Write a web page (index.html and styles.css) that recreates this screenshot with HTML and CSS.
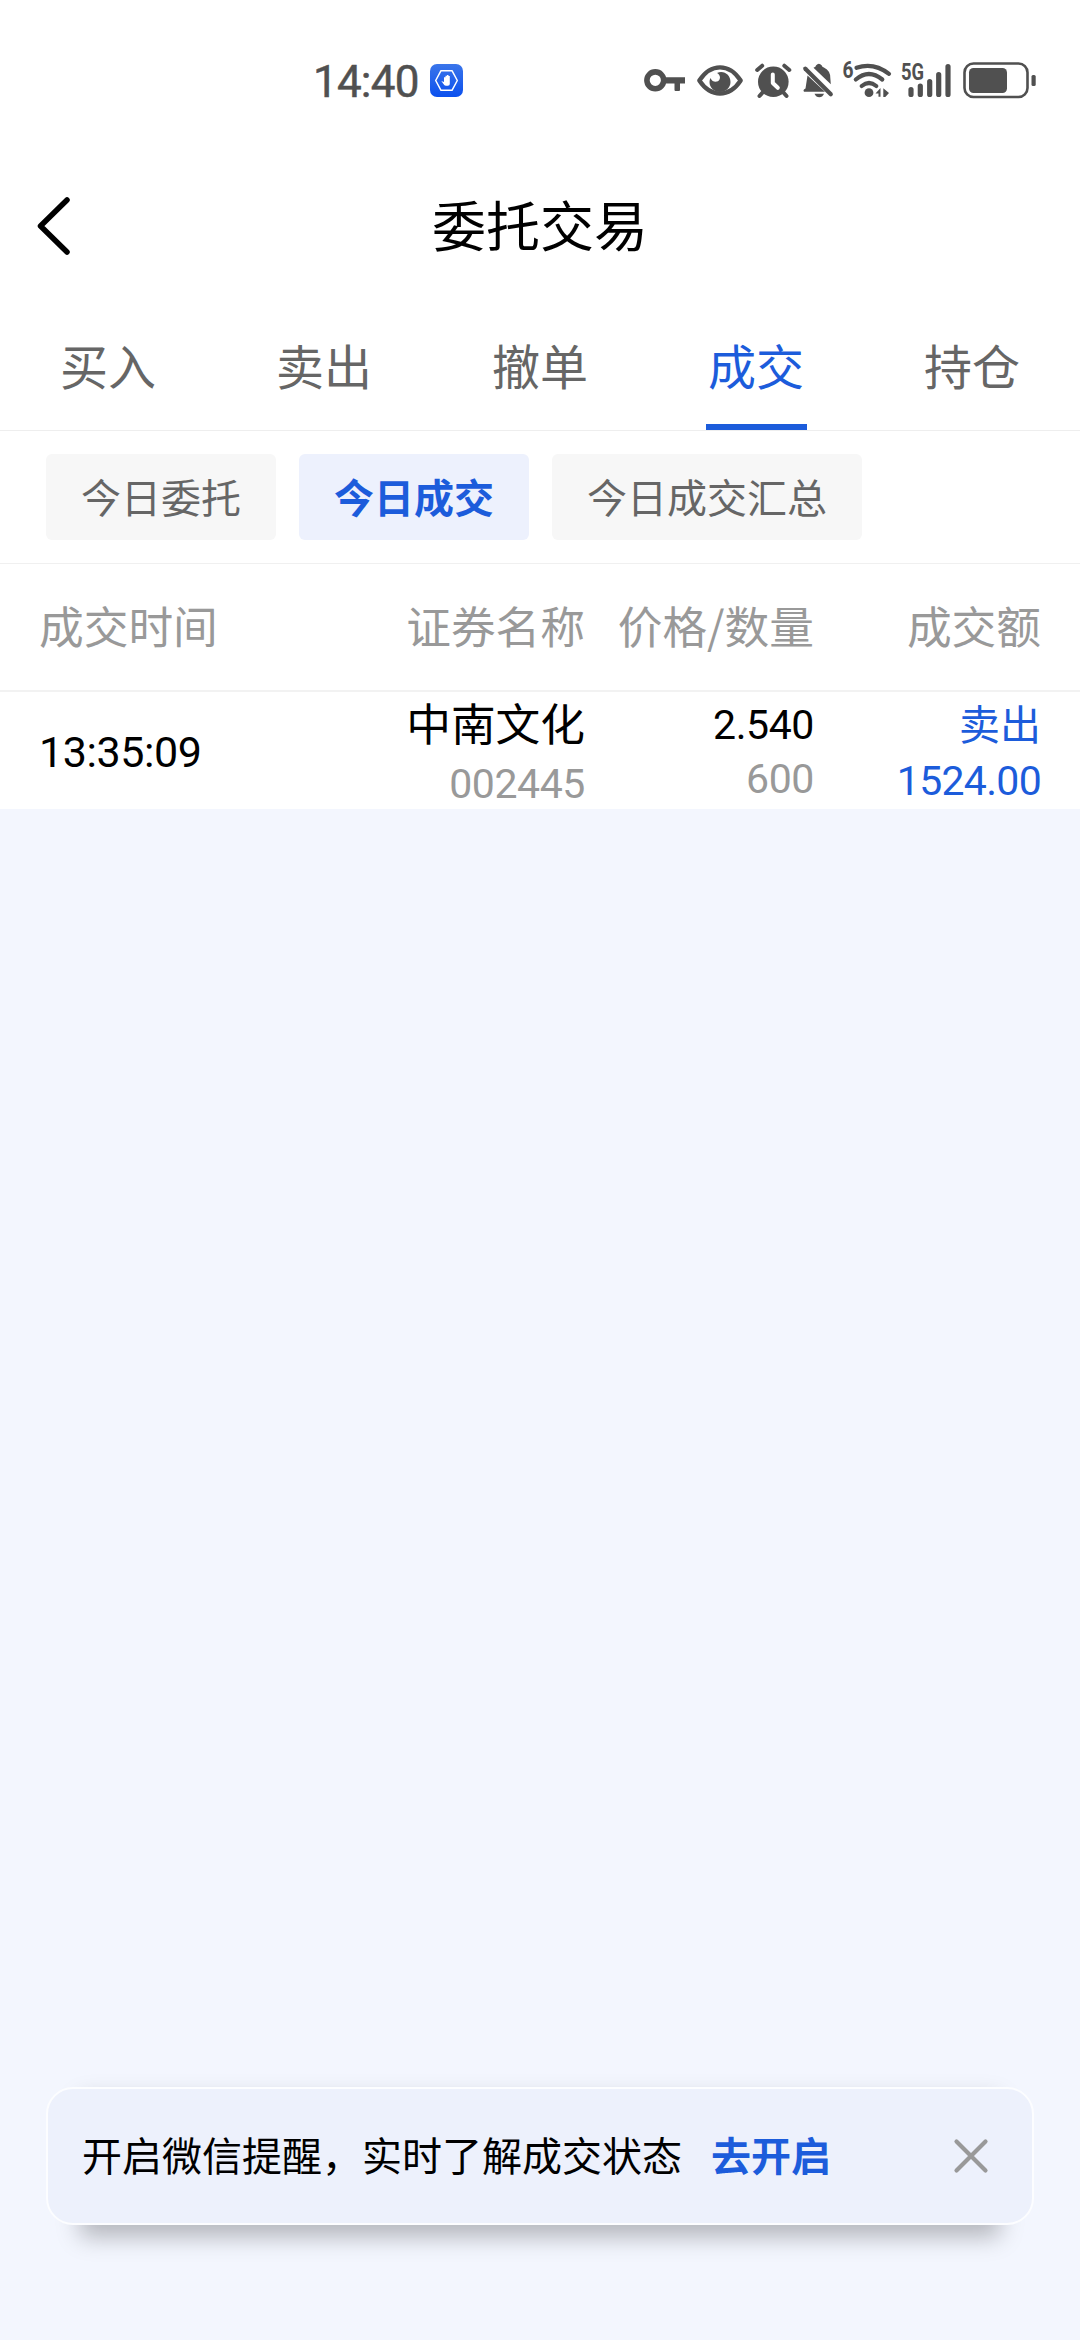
FILE: index.html
```html
<!DOCTYPE html>
<html lang="zh-CN">

<head>
    <meta charset="UTF-8">
    <meta name="viewport" content="width=device-width, initial-scale=1.0">
    <title>委托交易</title>
    <link rel="stylesheet" href="styles.css">
</head>

<body>
    <div class="status">
        <div class="status-left">
            <span class="clock">14:40</span>
            <svg class="app-icon" width="33" height="33" viewBox="0 0 33 33">
                <defs>
                    <linearGradient id="azul" x1="0" y1="0" x2="0" y2="1">
                        <stop offset="0" stop-color="#3a75ea" />
                        <stop offset="1" stop-color="#0b50ee" />
                    </linearGradient>
                </defs>
                <rect width="33" height="33" rx="7" fill="url(#azul)" />
                <path d="M11 6.7h11l5.3 9.8-5.3 9.8H11L5.700 16.500z" fill="none" stroke="#fff" stroke-width="1.500" stroke-linejoin="round" />
                <path d="M11.300 17l2.700 1v-4.800h1.500v-1.500h1.500V11h1.500v1h1.300v8q0 1.800-2 1.800h-2q-1.500 0-2.500-2z" fill="#fff" />
            </svg>
        </div>
        <div class="status-right">
            <!-- vpn key -->
            <svg class="key" width="42" height="40" viewBox="644 60 42 40">
                <circle cx="655.300" cy="80.300" r="8.400" fill="none" stroke="#505050" stroke-width="5.600" />
                <path d="M664 77.300h21v6.200h-5V90q0 1-1 1h-3.500q-1 0-1-1v-6.500H664z" fill="#505050" />
            </svg>
            <!-- eye -->
            <svg class="eye" width="46" height="40" viewBox="697 60 46 40">
                <path d="M699.300 80.500Q708 67.300 720 67.300T740.700 80.500Q732 93.500 720 93.500T699.300 80.500z" fill="none" stroke="#505050" stroke-width="4.300" stroke-linejoin="round" />
                <path d="M717 73c7-3 13.500 2 13.500 9 0 6-5 10-10.500 10s-10.500-4-10.500-10q0-2 1-4c2 5 7.500 4.500 9 1.500 1.300-2.500 0-5-2.500-6.500z" fill="#505050" />
            </svg>
            <!-- alarm -->
            <svg class="alarm" width="37" height="40" viewBox="755 60 37 40">
                <circle cx="773.300" cy="81.700" r="15.300" fill="#505050" />
                <path d="M757.200 70l5-4.300M789.300 70l-5-4.300M763 92l-3.500 4M783 92l3.500 4" fill="none" stroke="#505050" stroke-width="4" stroke-linecap="round" />
                <path d="M772.800 74.500v8.500l5 4.800" fill="none" stroke="#fff" stroke-width="4" stroke-linecap="round" stroke-linejoin="round" />
            </svg>
            <!-- muted bell -->
            <svg class="bell" width="31" height="40" viewBox="803 60 31 40">
                <path d="M807.500 75.500L825 91.700h-21q-1.500-1.700 1.500-3.200z" fill="#505050" />
                <path d="M813.500 67.800q2.500-1 2.500-2.300 2.800-3.300 5.800 0 0 1.300 2.500 2.300 6 3 6 10l.5 6.500z" fill="#505050" />
                <path d="M814.500 93.700h9.500q-1.500 3.500-4.700 3.500t-4.800-3.500z" fill="#505050" />
                <path d="M805.300 68.800l25.500 25.500" fill="none" stroke="#505050" stroke-width="4.200" stroke-linecap="round" />
            </svg>
            <!-- wifi 6 -->
            <svg class="wifi" width="51" height="40" viewBox="840 60 51 40">
                <text x="842.500" y="78" class="tiny" textLength="11" lengthAdjust="spacingAndGlyphs">6</text>
                <path d="M856.500 67.800q17-6 32.500 6M855.800 79.500q13-11 26.500 0M861.700 86q7.300-6 14.600 0" fill="none" stroke="#505050" stroke-width="4.200" stroke-linecap="round" />
                <circle cx="869" cy="92.700" r="4.400" fill="#505050" />
                <path d="M875.500 93.500l5-5.500v8.800h-2v-3.300zM883.300 88.300l5.700 4.700-3.700 4h-2z" fill="#505050" />
            </svg>
            <!-- 5G signal -->
            <svg class="signal" width="51" height="40" viewBox="901 60 51 40">
                <text x="901" y="80" class="tiny" textLength="23" lengthAdjust="spacingAndGlyphs">5G</text>
                <path d="M911 89.500v5M920.300 86v8.500M929.700 81.500v13M938.700 74.700v19.800M948 66.500v28" fill="none" stroke="#505050" stroke-width="5.200" stroke-linecap="round" />
            </svg>
            <!-- battery -->
            <svg class="battery" width="73" height="40" viewBox="963 60 73 40">
                <rect x="964.500" y="63.500" width="63" height="33.500" rx="9" fill="none" stroke="#505050" stroke-width="2.600" />
                <rect x="969" y="68" width="38" height="25" rx="4.500" fill="#505050" />
                <rect x="1031.500" y="75" width="4.200" height="11" rx="1.500" fill="#505050" />
            </svg>
        </div>
    </div>

    <div class="header">
        <svg class="back" width="34" height="60" viewBox="0 0 34 60">
            <path d="M31 4L4.500 30L31 56" fill="none" stroke="#000" stroke-width="5.500" stroke-linecap="round" stroke-linejoin="round" />
        </svg>
        <div class="title">委托交易</div>
    </div>

    <div class="tabs">
        <div class="tab"><span>买入</span></div>
        <div class="tab"><span>卖出</span></div>
        <div class="tab"><span>撤单</span></div>
        <div class="tab active"><span>成交</span></div>
        <div class="tab"><span>持仓</span></div>
    </div>

    <div class="chips">
        <div class="chip">今日委托</div>
        <div class="chip selected">今日成交</div>
        <div class="chip">今日成交汇总</div>
    </div>

    <div class="row head">
        <div class="time">成交时间</div>
        <div class="name">证券名称</div>
        <div class="price">价格/数量</div>
        <div class="amount">成交额</div>
    </div>

    <div class="row deal">
        <div class="time">
            <div class="hour">13:35:09</div>
        </div>
        <div class="name">
            <div class="stock">中南文化</div>
            <div class="code">002445</div>
        </div>
        <div class="price">
            <div class="value">2.540</div>
            <div class="count">600</div>
        </div>
        <div class="amount">
            <div class="side">卖出</div>
            <div class="total">1524.00</div>
        </div>
    </div>

    <div class="content"></div>

    <div class="notice">
        <span class="notice-text">开启微信提醒，实时了解成交状态</span>
        <span class="notice-link">去开启</span>
        <svg class="close" width="38" height="38" viewBox="0 0 38 38">
            <path d="M4.500 4.500L33.500 33.500M33.500 4.500L4.500 33.500" fill="none" stroke="#999" stroke-width="4.200" stroke-linecap="round" />
        </svg>
    </div>
</body>

</html>
```
FILE: styles.css
```css
* {
    box-sizing: border-box;
}

body {
    margin: 0;
    width: 1080px;
    height: 2340px;
    display: flex;
    flex-direction: column;
    overflow: hidden;
    background-color: #f3f6fe;
    color: #000;
    font-family: "Noto Sans CJK SC", sans-serif;
}

svg {
    display: block;
    flex: none;
    overflow: visible;
}

/* status bar */
.status {
    height: 160px;
    padding: 60px 44px 0 313px;
    display: flex;
    justify-content: space-between;
    background-color: #fff;
}

.status-left,
.status-right {
    height: 40px;
    display: flex;
    align-items: center;
}

.clock {
    width: 117px;
    padding-top: 3px;
    font-family: Roboto, sans-serif;
    font-size: 44px;
    line-height: 44px;
    letter-spacing: -0.8px;
    color: #505050;
    -webkit-text-stroke: 0.5px #505050;
}

.tiny {
    font-family: Roboto, sans-serif;
    font-size: 23px;
    font-weight: 700;
    fill: #505050;
}

.eye,
.bell,
.battery {
    margin-left: 11px;
}

.alarm {
    margin-left: 12px;
}

.wifi {
    margin-left: 6px;
}

.signal {
    margin-left: 10px;
}

/* title */
.header {
    height: 132px;
    padding-left: 36px;
    display: flex;
    align-items: center;
    background-color: #fff;
}

.title {
    flex: 1;
    padding: 0 70px 4px 0;
    text-align: center;
    font-size: 54px;
    line-height: 80px;
}

/* tabs */
.tabs {
    height: 139px;
    display: flex;
    background-color: #fff;
    border-bottom: 1px solid #eee;
}

.tab {
    flex: 1;
    display: flex;
    justify-content: center;
    font-size: 48px;
    line-height: 144px;
    color: #666;
}

.tab span {
    width: 101px;
    height: 138px;
    text-align: center;
}

.active {
    color: #1c5cdb;
}

.active span {
    border-bottom: 6px solid #1c5cdb;
}

.chips {
    height: 133px;
    padding: 23px 46px;
    display: flex;
    gap: 23px;
    background-color: #fff;
    border-bottom: 1px solid #f0f0f0;
}

.chip {
    height: 86px;
    padding: 0 35px;
    border-radius: 6px;
    font-size: 40px;
    line-height: 84px;
    color: #666;
    background-color: #f7f7f7;
}

.selected {
    color: #1c5cdb;
    background-color: #edf1fd;
    font-weight: 700;
}

/* table */
.row {
    padding: 0 39px;
    display: flex;
    background-color: #fff;
    text-align: right;
}

.head {
    height: 128px;
    font-size: 44.7px;
    line-height: 122px;
    color: #999;
    border-bottom: 2px solid #f2f2f2;
}

.time {
    width: 270px;
    text-align: left;
}

.name {
    width: 276px;
}

.price {
    width: 229px;
}

.amount {
    flex: 1;
}

.deal {
    height: 117px;
}

.hour,
.code,
.value,
.count,
.total {
    font-family: Roboto, sans-serif;
    font-size: 41px;
    letter-spacing: -0.4px;
}

.hour {
    font-size: 43px;
    line-height: 120px;
}

.stock {
    font-size: 44.7px;
    line-height: 60px;
}

.code {
    line-height: 64px;
    color: #999;
}

.value {
    line-height: 66px;
}

.count {
    line-height: 43px;
    color: #999;
}

.side,
.total {
    color: #1c5cdb;
}

.side {
    font-size: 41px;
    line-height: 60px;
}

.total {
    line-height: 58px;
    letter-spacing: -0.7px;
}

.content {
    flex: 1;
}

/* bottom notice */
.notice {
    position: relative;
    height: 138px;
    margin: 0 46px 115px;
    padding: 0 42px 0 34px;
    display: flex;
    align-items: center;
    border: 2px solid #fcfdff;
    border-radius: 27px;
    background-color: #edf1fc;
    font-size: 40px;
    line-height: 60px;
}

/* shadow is narrower than the card */
.notice::before {
    content: "";
    position: absolute;
    z-index: -1;
    top: -2px;
    bottom: -2px;
    left: 32px;
    right: 32px;
    box-shadow: 0 12px 22px rgba(0, 0, 0, 0.26);
}

.notice-text,
.notice-link {
    padding-bottom: 5px;
}

.notice-link {
    flex: 1;
    margin-left: 29px;
    color: #1c5cdb;
    font-weight: 700;
}
```
